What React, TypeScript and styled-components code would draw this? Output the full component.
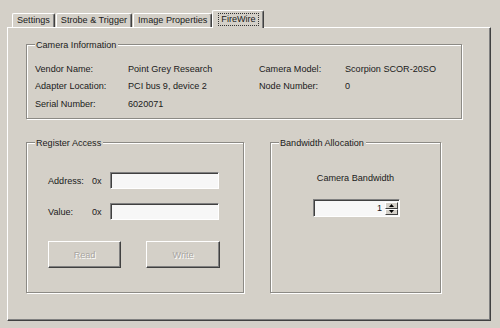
import styled, { createGlobalStyle } from 'styled-components'

const Global = createGlobalStyle`
  html, body {
    margin: 0;
    padding: 0;
    background: #d4d0c8;
  }
  body {
    font-family: "Liberation Sans", Arial, sans-serif;
    font-size: 9.1px;
    color: #1a1a1a;
  }
`

const Window = styled.div`
  width: 500px;
  height: 328px;
  padding-top: 10px;
  box-sizing: border-box;
  background: #d4d0c8;
  overflow: hidden;
`

const TabStrip = styled.div`
  display: flex;
  align-items: flex-end;
  height: 17px;
  padding-left: 12px;
`

const Tab = styled.div<{ $active?: boolean }>`
  position: relative;
  box-sizing: border-box;
  height: ${(p) => (p.$active ? '18px' : '14px')};
  margin: ${(p) => (p.$active ? '0 -2px -1px -1px' : '0 1px 0 0')};
  padding: ${(p) => (p.$active ? '2px 4px 0 5px' : '0 4px 0 4px')};
  z-index: ${(p) => (p.$active ? 1 : 0)};
  display: flex;
  align-items: ${(p) => (p.$active ? 'flex-start' : 'center')};
  background: #d4d0c8;
  border-top: 1px solid #fff;
  border-left: 1px solid #fff;
  border-right: 1px solid #404040;
  border-radius: 2px 2px 0 0;
  box-shadow: inset -1px 0 0 #808080;
  white-space: nowrap;
  line-height: 11px;
`

const Focus = styled.span`
  padding: 1px 3px;
  outline: 1px dotted #333;
  outline-offset: -1px;
`

const Panel = styled.div`
  box-sizing: border-box;
  width: 484px;
  height: 294px;
  margin-left: 7px;
  padding: 16px 0 0 18px;
  border-top: 1px solid #fff;
  border-left: 1px solid #fff;
  border-right: 1px solid #404040;
  border-bottom: 1px solid #404040;
  box-shadow: inset -1px -1px 0 #808080;
`

const Group = styled.div<{ $w: number; $h: number }>`
  position: relative;
  box-sizing: border-box;
  width: ${(p) => p.$w}px;
  height: ${(p) => p.$h}px;
  border: 1px solid #8c8a85;
  box-shadow: 1px 1px 0 #fff, inset 1px 1px 0 #fff;
`

const Caption = styled.span`
  position: absolute;
  top: -6px;
  left: 8px;
  padding: 0 2px 0 1px;
  line-height: 12px;
  background: #d4d0c8;
`

const InfoGrid = styled.div`
  display: grid;
  grid-template-columns: 93px 131px 86px auto;
  grid-auto-rows: 17.5px;
  align-items: center;
  padding: 15px 0 0 8px;
  white-space: nowrap;
`

const Row = styled.div`
  display: flex;
  gap: 26px;
  margin-top: 23px;
`

const RegisterBody = styled.div`
  padding: 29px 0 0 21px;
`

const FormGrid = styled.div`
  display: grid;
  grid-template-columns: 44px 18px 109px;
  grid-auto-rows: 17px;
  row-gap: 14px;
  align-items: center;
`

const TextBox = styled.div`
  box-sizing: border-box;
  height: 17px;
  background: #f7f7f7;
  border-top: 1px solid #808080;
  border-left: 1px solid #808080;
  border-right: 1px solid #fff;
  border-bottom: 1px solid #fff;
  box-shadow: inset 1px 1px 0 #404040;
`

const Buttons = styled.div`
  display: flex;
  gap: 25px;
  margin-top: 21px;
`

const Button = styled.button<{ $w: number }>`
  box-sizing: border-box;
  width: ${(p) => p.$w}px;
  height: 27px;
  padding: 0;
  font: inherit;
  color: #a8a5a0;
  text-shadow: 1px 1px 0 #fff;
  background: #d4d0c8;
  border-top: 1px solid #fff;
  border-left: 1px solid #fff;
  border-right: 1px solid #404040;
  border-bottom: 1px solid #404040;
  box-shadow: inset -1px -1px 0 #808080;
`

const BandwidthBody = styled.div`
  display: flex;
  flex-direction: column;
  align-items: center;
  padding-top: 29px;
`

const BandLabel = styled.div`
  line-height: 12px;
`

const Spinner = styled.div`
  box-sizing: border-box;
  display: flex;
  width: 87px;
  height: 18px;
  margin-top: 15px;
  margin-left: 2px;
  background: #f7f7f7;
  border-top: 1px solid #808080;
  border-left: 1px solid #808080;
  border-right: 1px solid #fff;
  border-bottom: 1px solid #fff;
  box-shadow: inset 1px 1px 0 #404040;
  padding: 2px 1px 1px 2px;
`

const SpinValue = styled.div`
  flex: 1;
  text-align: right;
  padding-right: 3px;
  line-height: 13px;
`

const SpinButtons = styled.div`
  display: flex;
  flex-direction: column;
  width: 13px;
`

const SpinButton = styled.div`
  flex: 1;
  display: flex;
  align-items: center;
  justify-content: center;
  background: #d4d0c8;
  border-top: 1px solid #fff;
  border-left: 1px solid #fff;
  border-right: 1px solid #404040;
  border-bottom: 1px solid #404040;
`

function Arrow({ up }: { up?: boolean }) {
  return (
    <svg width="5" height="3" viewBox="0 0 5 3">
      <path d={up ? 'M2.5 0 L5 3 L0 3 Z' : 'M0 0 L5 0 L2.5 3 Z'} fill="#000" />
    </svg>
  )
}

const info = [
  ['Vendor Name:', 'Point Grey Research', 'Camera Model:', 'Scorpion SCOR-20SO'],
  ['Adapter Location:', 'PCI bus 9, device 2', 'Node Number:', '0'],
  ['Serial Number:', '6020071', '', ''],
]

export default function App() {
  return (
    <Window>
      <Global />
      <TabStrip>
        <Tab>Settings</Tab>
        <Tab>Strobe &amp; Trigger</Tab>
        <Tab>Image Properties</Tab>
        <Tab $active>
          <Focus>FireWire</Focus>
        </Tab>
      </TabStrip>
      <Panel>
        <Group $w={436} $h={75}>
          <Caption>Camera Information</Caption>
          <InfoGrid>
            {info.flatMap((r, i) => r.map((c, j) => <span key={i + '-' + j}>{c}</span>))}
          </InfoGrid>
        </Group>
        <Row>
          <Group $w={218} $h={151}>
            <Caption>Register Access</Caption>
            <RegisterBody>
              <FormGrid>
                <span>Address:</span>
                <span>0x</span>
                <TextBox />
                <span>Value:</span>
                <span>0x</span>
                <TextBox />
              </FormGrid>
              <Buttons>
                <Button $w={73} disabled>Read</Button>
                <Button $w={74} disabled>Write</Button>
              </Buttons>
            </RegisterBody>
          </Group>
          <Group $w={171} $h={151}>
            <Caption>Bandwidth Allocation</Caption>
            <BandwidthBody>
              <BandLabel>Camera Bandwidth</BandLabel>
              <Spinner>
                <SpinValue>1</SpinValue>
                <SpinButtons>
                  <SpinButton>
                    <Arrow up />
                  </SpinButton>
                  <SpinButton>
                    <Arrow />
                  </SpinButton>
                </SpinButtons>
              </Spinner>
            </BandwidthBody>
          </Group>
        </Row>
      </Panel>
    </Window>
  )
}
